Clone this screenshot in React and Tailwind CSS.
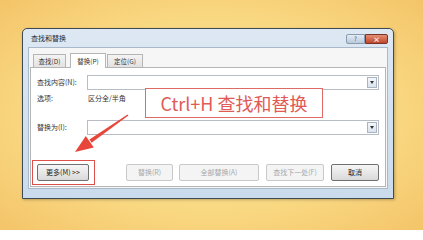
import React from "react";

const font = { fontFamily: '"Noto Sans CJK SC", "Noto Sans", sans-serif' };

function Btn({ children, w, enabled }) {
  return (
    <div
      className={
        "h-[17px] flex items-center justify-center text-[7px] rounded-[2px] border " +
        (enabled
          ? "border-[#707070] bg-gradient-to-b from-[#f6f6f6] to-[#d9d9d9] text-[#222]"
          : "border-[#c9c9c9] bg-[#f4f4f4] text-[#a8a8a8]")
      }
      style={{ width: w }}
    >
      {children}
    </div>
  );
}

function Combo() {
  return (
    <div className="flex-1 h-[15px] border border-[#b8bcc4] bg-white flex justify-end items-stretch p-[1px]">
      <div className="w-[10px] border border-[#a8b4c2] bg-gradient-to-b from-[#f4f7fb] to-[#dbe3ec] flex items-center justify-center">
        <div className="w-0 h-0 border-l-[2px] border-r-[2px] border-t-[3px] border-l-transparent border-r-transparent border-t-[#333]" />
      </div>
    </div>
  );
}

export default function App() {
  return (
    <div
      className="relative w-[423px] h-[230px] overflow-hidden pt-[28px] pl-[22px] bg-[radial-gradient(ellipse_at_center,#fde496_0%,#f9d882_60%,#f4c468_100%)]"
      style={font}
    >
      {/* dialog */}
      <div className="w-[372px] h-[171px] border border-[#3e4b55] rounded-t-[5px] bg-gradient-to-b from-[#dde8f3] to-[#c9dbec] flex flex-col px-[5px] pb-[9px] shadow-[1px_1px_3px_rgba(0,0,0,0.25)]">
        <div className="h-[18px] flex items-start justify-between">
          <span className="text-[7px] pl-[3px] pt-[6px] text-[#1e2a38] leading-none">查找和替换</span>
          <div className="flex mt-[5px] mr-[0px]">
            <div className="w-[19px] h-[10px] border border-[#8a9bb0] rounded-l-[2px] bg-gradient-to-b from-[#e4ecf5] to-[#b9c9db] flex items-center justify-center text-[6px] leading-none text-[#3a4a5c]">?</div>
            <div className="w-[23px] h-[10px] border border-[#7a3324] rounded-r-[2px] bg-gradient-to-b from-[#e48e74] to-[#c0452e] flex items-center justify-center text-[7px] leading-none text-white font-bold">×</div>
          </div>
        </div>
        <div className="flex-1 bg-[#f6f6f6] border border-[#a9b9c9] px-[1px] pt-[5px] flex flex-col">
          {/* tabs */}
          <div className="flex items-end h-[14px] ml-[3px]">
            <div className="w-[33px] h-[13px] border border-b-0 border-[#b5b5b5] bg-gradient-to-b from-[#f4f4f4] to-[#e2e2e2] flex items-center justify-center text-[6.5px] text-[#333] leading-none">查找(D)</div>
            <div className="w-[36px] h-[15px] ml-[4px] border border-b-0 border-[#b5b5b5] bg-white flex items-center justify-center text-[6.5px] text-[#333] leading-none relative top-[1px] z-10">替换(P)</div>
            <div className="w-[36px] h-[13px] ml-[1px] border border-b-0 border-[#b5b5b5] bg-gradient-to-b from-[#f4f4f4] to-[#e2e2e2] flex items-center justify-center text-[6.5px] text-[#333] leading-none">定位(G)</div>
          </div>
          {/* panel */}
          <div className="h-[120px] border border-[#b5b5b5] bg-white flex flex-col px-[6px] text-[7px] text-[#333]">
            <div className="mt-[7px] h-[15px] flex items-center">
              <span className="w-[50px] leading-none">查找内容(N):</span>
              <Combo />
            </div>
            <div className="mt-[3px] h-[10px] flex items-center">
              <span className="w-[51px] leading-none">选项:</span>
              <span className="leading-none">区分全/半角</span>
            </div>
            <div className="mt-[17px] h-[15px] flex items-center">
              <span className="w-[50px] leading-none">替换为(I):</span>
              <Combo />
            </div>
            <div className="mt-auto mb-[5px] flex items-center">
              <Btn w={52} enabled>更多(M) &gt;&gt;</Btn>
              <div className="ml-auto flex">
                <Btn w={47}>替换(R)</Btn>
                <div className="ml-[6px]"><Btn w={80}>全部替换(A)</Btn></div>
                <div className="ml-[7px]"><Btn w={58}>查找下一处(F)</Btn></div>
                <div className="ml-[7px]"><Btn w={48} enabled>取消</Btn></div>
              </div>
            </div>
          </div>
        </div>
      </div>

      {/* red highlight around 更多 button */}
      <div className="absolute left-[32px] top-[160px] w-[63px] h-[25px] border-[1.5px] border-[#e0504a]" />

      {/* callout */}
      <div className="absolute left-[145px] top-[88px] w-[178px] h-[30px] border-[1.5px] border-[#e06a66] bg-white flex items-center justify-center">
        <span className="text-[18px] leading-none text-[#e05a56]" style={font}>Ctrl+H 查找和替换</span>
      </div>

      {/* arrow */}
      <svg className="absolute left-0 top-0" width="423" height="230" viewBox="0 0 423 230">
        <polygon points="127.6,114.4 128.4,115.6 91.6,142.8 89.4,139.6" fill="#e8463a" />
        <polygon points="75,152 85.8,136 93.8,147.4" fill="#e8463a" />
      </svg>
    </div>
  );
}
